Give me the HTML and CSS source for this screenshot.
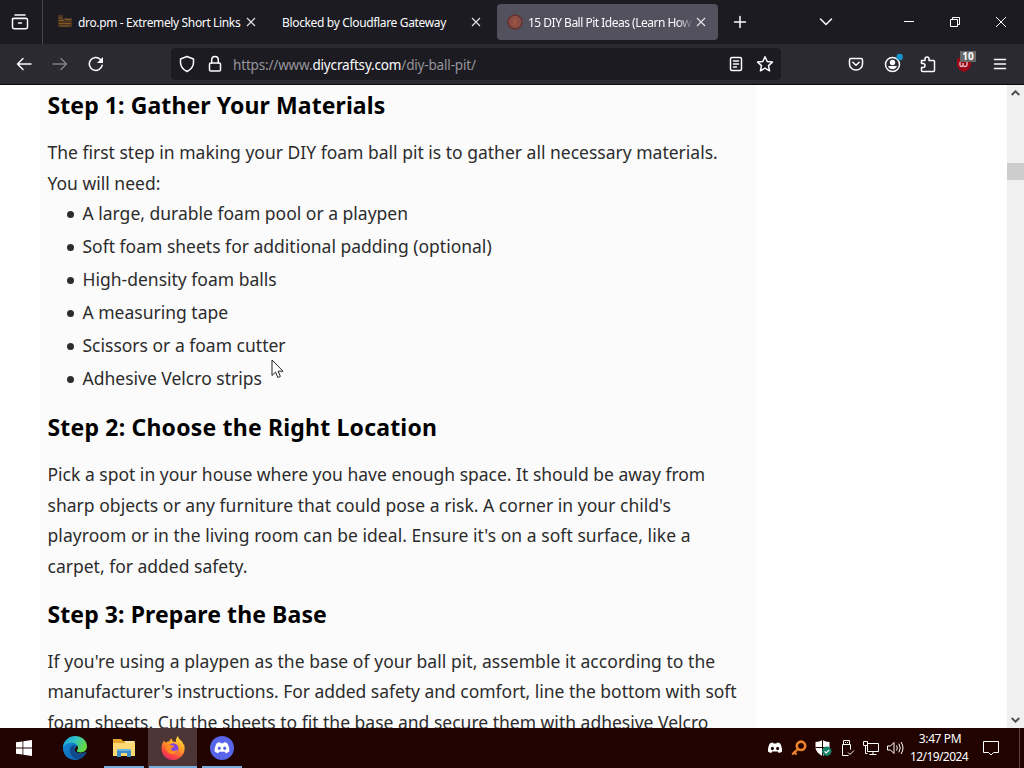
FILE: index.html
```html
<!DOCTYPE html>
<html lang="en">
<head>
    <meta charset="UTF-8">
    <meta name="viewport" content="width=device-width, initial-scale=1.0">
    <title>15 DIY Ball Pit Ideas (Learn How)</title>
    <link rel="stylesheet" href="styles.css">
</head>
<body>
    <div class="tabbar">
        <div class="tab-archive">
            <svg width="18" height="18" viewBox="0 0 18 18" class="line"><path d="M4 2h10M2.5 5.5h13M1.5 5.5v8.3c0 1.2.8 2 2 2h11c1.2 0 2-.8 2-2V7c0-1-.7-1.7-1.7-1.7H3.2c-1 0-1.7.7-1.7 1.7M7.500 10h3"/></svg>
        </div>
        <div class="tab">
            <svg class="favicon" width="16" height="16" viewBox="0 0 16 16"><path d="M1 1h5v3h9v9H1z" fill="#493323"/><path d="M2 4h3M2 6.5h5M8 5.5h6M2 9.5h12M3 12h10" stroke="#85581f" fill="none"/></svg>
            <span class="tab-title t-dro">dro.pm - Extremely Short Links</span>
            <svg class="tab-close" width="10" height="10" viewBox="0 0 10 10"><path d="M1 1l8 8M9 1l-8 8"/></svg>
        </div>
        <div class="tab">
            <span class="tab-title t-blocked">Blocked by Cloudflare Gateway</span>
            <svg class="tab-close" width="10" height="10" viewBox="0 0 10 10"><path d="M1 1l8 8M9 1l-8 8"/></svg>
        </div>
        <div class="tab active">
            <svg class="favicon" width="16" height="16" viewBox="0 0 16 16"><circle cx="8" cy="8" r="7" fill="#894c42" stroke="#633333" stroke-width="1.5"/><path d="M5 5l6 6M11 5l-6 6M8 3v10" stroke="#a75b43" stroke-width=".8"/></svg>
            <span class="tab-title t-ball">15 DIY Ball Pit Ideas (Learn How</span>
            <svg class="tab-close" width="10" height="10" viewBox="0 0 10 10"><path d="M1 1l8 8M9 1l-8 8"/></svg>
        </div>
        <svg class="new-tab line" width="14" height="14" viewBox="0 0 14 14"><path d="M7 1.500v11M1.500 7h11"/></svg>
        <svg class="all-tabs line" width="14" height="14" viewBox="0 0 14 14"><path d="M1.500 4L7 9.500 12.500 4"/></svg>
        <div class="window-buttons">
            <svg width="12" height="12" viewBox="0 0 12 12"><path d="M1 5.500h10"/></svg>
            <svg width="12" height="12" viewBox="0 0 12 12"><path d="M1.500 3.500h7v7h-7zM3.500 3.500v-2h7v7h-2"/></svg>
            <svg width="12" height="12" viewBox="0 0 12 12"><path d="M1 1l10 10M11 1L1 11"/></svg>
        </div>
    </div>

    <div class="toolbar">
        <div class="nav-buttons">
            <svg class="line" width="16" height="16" viewBox="0 0 16 16"><path d="M15 8H1.500M7 2.500L1.500 8 7 13.500"/></svg>
            <svg class="line disabled" width="16" height="16" viewBox="0 0 16 16"><path d="M1 8h13.500M9 2.500L14.500 8 9 13.500"/></svg>
            <svg class="line" width="16" height="16" viewBox="0 0 16 16"><path d="M14.200 9.200A6.500 6.500 0 1 1 12.500 3.400"/><path d="M15 1v6H9z" fill="#fbfbfe" stroke="none"/></svg>
        </div>
        <div class="urlbar">
            <svg class="line" width="16" height="18" viewBox="0 0 16 18"><path d="M8 1.500L14.500 4v3.500c0 4-2.500 7-6.500 9-4-2-6.500-5-6.500-9V4z"/></svg>
            <svg class="line" width="16" height="18" viewBox="0 0 16 18"><rect x="2.500" y="8" width="11" height="8" rx="1.300"/><path d="M4.700 8V4.800a3.300 3.300 0 0 1 6.600 0V8"/></svg>
            <span class="url">https://www.<b>diycraftsy.com</b>/diy-ball-pit/</span>
            <svg class="line" width="16" height="16" viewBox="0 0 16 16"><rect x="2.500" y="1.500" width="11" height="13" rx="1.500"/><path d="M5.500 5h5M5.500 8h5M5.500 11h3"/></svg>
            <svg class="line" width="18" height="18" viewBox="0 0 18 18"><path d="M9 1.800l2.200 4.700 5.200.6-3.900 3.500 1.100 5.200L9 13.200l-4.600 2.600 1.100-5.200L1.600 7.100l5.200-.6z"/></svg>
        </div>
        <div class="extensions">
            <svg class="line" width="16" height="16" viewBox="0 0 16 16"><path d="M3 2.500h10c1 0 1.500.5 1.500 1.500v4a6.500 6 0 0 1-13 0V4c0-1 .5-1.500 1.500-1.500zM4.800 6.300L8 9.300l3.200-3"/></svg>
            <svg width="22" height="22" viewBox="0 0 22 22"><circle cx="11.500" cy="11.500" r="7" fill="none" stroke="#fbfbfe" stroke-width="1.500"/><circle cx="11.500" cy="9.500" r="2.700" fill="#fbfbfe"/><path d="M7 13h9c-.8 2.300-2.500 3.300-4.500 3.300S7.800 15.300 7 13z" fill="#fbfbfe"/><circle cx="18.700" cy="4" r="3.200" fill="#1694cc"/></svg>
            <svg class="line" width="16" height="18" viewBox="0 0 16 18"><path d="M1.500 8V5.500H5V4a2 2 0 0 1 4 0v1.500h4.500c.8 0 1 .4 1 1v9c0 .7-.4 1-1 1H2.500c-.7 0-1-.3-1-1v-3H3a2 2 0 0 0 0-4H1.500z"/></svg>
            <div class="ublock">
                <svg width="16" height="16" viewBox="0 0 16 16"><path d="M8 0l7 3v5c0 4-3 6.500-7 8-4-1.500-7-4-7-8V3z" fill="#9e0718"/><path d="M4 6v3c0 2 3 2 3 0V7v2c0 2 4 2 4 0V6" fill="none" stroke="#e9c9cf" stroke-width="1.300"/></svg>
                <span class="badge">10</span>
            </div>
            <svg class="line" width="16" height="16" viewBox="0 0 16 16"><path d="M2.500 3.500h11M2.500 8h11M2.500 12.500h11"/></svg>
        </div>
    </div>

    <div class="page">
        <div class="article">
            <h2>Step 1: Gather Your Materials</h2>
            <p>The first step in making your DIY foam ball pit is to gather all necessary materials.<br>You will need:</p>
            <ul>
                <li>A large, durable foam pool or a playpen</li>
                <li>Soft foam sheets for additional padding (optional)</li>
                <li>High-density foam balls</li>
                <li>A measuring tape</li>
                <li>Scissors or a foam cutter</li>
                <li>Adhesive Velcro strips</li>
            </ul>
            <h2 class="wide">Step 2: Choose the Right Location</h2>
            <p>Pick a spot in your house where you have enough space. It should be away from<br><span class="loose">sharp objects or any furniture that could pose a risk. A corner in your child's</span><br><span class="looser">playroom or in the living room can be ideal. Ensure it's on a soft surface, like a</span><br>carpet, for added safety.</p>
            <h2>Step 3: Prepare the Base</h2>
            <p><span class="looser">If you're using a playpen as the base of your ball pit, assemble it according to the</span><br><span class="tight">manufacturer's instructions. For added safety and comfort, line the bottom with soft</span><br>foam sheets. Cut the sheets to fit the base and secure them with adhesive Velcro</p>
        </div>
        <div class="scrollbar">
            <svg width="9" height="6" viewBox="0 0 9 6"><path d="M.7 5L4.500 1.300 8.300 5"/></svg>
            <div class="thumb"></div>
            <svg width="9" height="6" viewBox="0 0 9 6"><path d="M.7 1l3.800 3.700L8.300 1"/></svg>
        </div>
    </div>

    <div class="taskbar">
        <div class="task start">
            <svg width="16" height="16" viewBox="0 0 16 16" fill="#fff"><path d="M0 2.300L6.500 1.400v6.200H0zM7.300 1.300L16 0v7.600H7.300zM0 8.400h6.500v6.200L0 13.700zM7.300 8.400H16V16l-8.700-1.300z"/></svg>
        </div>
        <div class="task">
            <svg width="24" height="24" viewBox="0 0 24 24">
                <defs>
                    <linearGradient id="edgeTop" x1="0" y1="0" x2="1" y2=".4"><stop offset="0" stop-color="#1595d6"/><stop offset=".5" stop-color="#30c3c8"/><stop offset="1" stop-color="#65d844"/></linearGradient>
                    <linearGradient id="edgeSide" x1="0" y1="0" x2="1" y2="1"><stop offset="0" stop-color="#1690dd"/><stop offset="1" stop-color="#0c56a3"/></linearGradient>
                </defs>
                <path d="M0 12C0 5 5 1 11 1c7 0 8 7 3 9-4 2-3 7 3 7.500 2.500.2 4-.8 5.500-1.500.6-.2.900.2.600.7C21 21 17 24 12 24 5 24 0 19 0 12z" fill="url(#edgeSide)"/>
                <path d="M9.500 9.500c-3.500 2-3.500 8 .5 11.500 1.500 1.500 3.500 2.300 5.500 2.400 3-.9 6-3.400 7.600-6.400.3-.7-.1-1-.7-.8-5 2.800-10.900.8-11.400-3.700-.1-1.500.4-2.500 1.500-3.500z" fill="#114a8b"/>
                <path d="M0 11.500C.8 4.500 6 0 12 0c7 0 12 4.800 12 10.300 0 4-3 6.200-6.200 6.200-2.500 0-4-.8-4-1.700 0-.7 1.200-1 1.200-3C15 9 12.200 6.800 9 6.800c-4 0-7.500 2-9 4.700z" fill="url(#edgeTop)"/>
            </svg>
        </div>
        <div class="task open">
            <svg width="22" height="20" viewBox="0 0 22 20"><path d="M0 1h8l2 2h12v15H0z" fill="#e6a72c"/><path d="M0 5h22v13H0z" fill="#fbd871"/><path d="M12 3h9v2h-9z" fill="#f8e6a4"/><path d="M4 11h14v8h-4v-4H8v4H4z" fill="#3c8cc8"/><path d="M4 11h14v2H4z" fill="#68b4e4"/></svg>
        </div>
        <div class="task open current">
            <svg width="24" height="24" viewBox="0 0 24 24">
                <defs><linearGradient id="fox" x1=".8" y1="0" x2=".3" y2="1"><stop offset="0" stop-color="#ffe03f"/><stop offset=".45" stop-color="#ff9a24"/><stop offset=".8" stop-color="#fb4342"/><stop offset="1" stop-color="#e52b70"/></linearGradient></defs>
                <path d="M3 4.500c.3 1 .8 1.800 1.500 2.200C6 5.500 7 5.500 8 5.500 8.500 4 9.500 3.200 11 2.500c-.2 1.500.2 2.200 1.200 3L15 6c-.4-2.500.3-4.500 2-6 .4 2.500 2 3.500 3.500 5 1.200 1.200 1.700 2.500 1.900 3.700L23 8c1 3.500 1 7-1 10.500-2 3.500-5.500 5.500-10 5.500C5.500 24 .8 19 .5 13 .4 9.700 1.500 6.500 3 4.500z" fill="url(#fox)"/>
                <circle cx="12.200" cy="12.500" r="5.300" fill="#8147dc"/>
                <path d="M5 8.500c2-.8 4 0 5 .8 1.300 0 2.500.2 3.200.8-.6 1.500-2.500 1.500-3 2.500-.3 2 2 3 4 2.200 1-.4 1.500-.6 2.600-.3-1.300 3-4 4-6.300 3.500C7.500 17.500 4.500 14 5 8.500z" fill="#ff8b22"/>
            </svg>
        </div>
        <div class="task open">
            <svg width="24" height="24" viewBox="0 0 24 24"><circle cx="12" cy="12" r="12" fill="#5865e8"/><path d="M6.700 7.300c1.300-.7 2.200-.9 3.300-1l.5 1h3l.5-1c1.100.1 2 .3 3.300 1 1.500 2.500 2.200 5.300 2 8.200-1.200 1-2.300 1.400-3.500 1.700l-.9-1.500H9.100l-.9 1.500c-1.200-.3-2.300-.7-3.500-1.700-.2-2.900.5-5.700 2-8.200z" fill="#fff"/><ellipse cx="9.300" cy="12.200" rx="1.500" ry="1.700" fill="#5865e8"/><ellipse cx="14.700" cy="12.200" rx="1.500" ry="1.700" fill="#5865e8"/></svg>
        </div>
        <div class="tray">
            <svg width="16" height="16" viewBox="0 0 16 16"><path d="M3 3.300c1.200-.6 2-.8 3-.9l.6 1h2.800l.6-1c1 .1 1.800.3 3 .9 1.500 2.400 2.200 5.200 2 8.200-1.200 1-2.200 1.300-3.300 1.600l-.9-1.500H5.200l-.9 1.500C3.200 12.800 2.200 12.500 1 11.500c-.2-3 .5-5.800 2-8.200z" fill="#fff"/><ellipse cx="5.400" cy="8.500" rx="1.500" ry="1.700" fill="#210300"/><ellipse cx="10.600" cy="8.500" rx="1.500" ry="1.700" fill="#210300"/></svg>
            <svg width="16" height="16" viewBox="0 0 16 16" fill="none" stroke="#ec8427"><circle cx="10" cy="5.800" r="4.200" stroke-width="2.600"/><path d="M7.200 8.700L1.200 14.500M2.500 11.500l3 3" stroke-width="2.200"/></svg>
            <svg width="18" height="16" viewBox="0 0 18 16"><path d="M8.500 0c2 1.300 4.300 2 7 2v5c0 4-3 7-7 9-4-2-7-5-7-9V2c2.700 0 5-.7 7-2z" fill="#fff"/><path d="M8.500 0v16M1.500 7.500h14" stroke="#210300"/><circle cx="12.800" cy="11.300" r="4.700" fill="#168267"/><path d="M10.500 11.300l1.700 1.700 3-3.200" stroke="#fff" stroke-width="1.200" fill="none"/></svg>
            <svg class="thin" width="16" height="18" viewBox="0 0 16 18"><path d="M4.500 5.500v-4h6v4M3.500 5.500h8v5M3.500 5.500v11h6M6 3.500h1M8 3.500h1M9 13.500l2 2 4-4"/></svg>
            <svg class="thin" width="18" height="16" viewBox="0 0 18 16"><path d="M5.500 3.500h11v8h-11zM11 11.500v3M7.500 14.500h7M1.500 1.500h4v4h-4zM3.500 5.500v8h2"/></svg>
            <svg class="thin" width="18" height="16" viewBox="0 0 18 16"><path d="M1.500 6h3L8 2.500v11L4.500 10h-3zM10.500 5.500q1.800 2.500 0 5M12.800 3.700q3 4.300 0 8.600M15 2q4 6 0 12"/></svg>
        </div>
        <div class="clock"><span>3:47 PM</span><span class="date">12/19/2024</span></div>
        <svg class="thin notice" width="18" height="18" viewBox="0 0 18 18"><path d="M1.500 2.500h15v11h-5L9 16l-2.500-2.500h-5z"/></svg>
        <div class="show-desktop"></div>
    </div>

    <svg class="cursor" width="13" height="20" viewBox="0 0 13 20"><path d="M1 1v15.500l3.500-3.400 2.300 5.400 2.600-1.100-2.300-5.200H12z"/></svg>
</body>
</html>
```

FILE: styles.css
```css
* {
    box-sizing: border-box;
}
body {
    margin: 0;
    width: 1024px;
    height: 768px;
    overflow: hidden;
    display: flex;
    flex-direction: column;
    font-family: "Noto Sans", "Open Sans", sans-serif;
    position: relative;
    background: #fff;
}
svg {
    flex: none;
    display: block;
}
.line {
    fill: none;
    stroke: #fbfbfe;
    stroke-width: 1.5;
    stroke-linecap: round;
    stroke-linejoin: round;
}
.disabled {
    opacity: 0.4;
}

/* Tabs */
.tabbar {
    height: 44px;
    flex: none;
    display: flex;
    align-items: center;
    background: #1c1b22;
    color: #fbfbfe;
}
.tab-archive {
    width: 43px;
    height: 44px;
    padding-left: 11px;
    margin-right: 4px;
    display: flex;
    align-items: center;
    border-right: 1px solid #48474f;
}
.tab {
    width: 221px;
    height: 36px;
    margin-right: 4px;
    padding: 0 12px 0 10px;
    display: flex;
    align-items: center;
    border-radius: 4px;
}
.tab.active {
    background: #53515e;
}
.favicon {
    margin-right: 5px;
}
.tab-title {
    flex: 1;
    min-width: 0;
    overflow: hidden;
    white-space: nowrap;
    font-size: 12px;
    line-height: 20px;
    margin-top: 2px;
    margin-right: 3px;
    letter-spacing: -0.34px;
}
.t-dro {
    letter-spacing: -0.36px;
}
.t-ball {
    letter-spacing: -0.5px;
    -webkit-mask-image: linear-gradient(to right, #000 91%, transparent);
    mask-image: linear-gradient(to right, #000 91%, transparent);
}
.tab-close {
    fill: none;
    stroke: #e4e4e8;
    stroke-width: 1.1;
}
.new-tab {
    margin-left: 11px;
}
.all-tabs {
    margin-left: 72px;
}
.window-buttons {
    display: flex;
    gap: 34px;
    margin-left: 70px;
}
.window-buttons svg {
    fill: none;
    stroke: #fff;
    stroke-width: 1;
}

/* Navigation */
.toolbar {
    height: 41px;
    flex: none;
    display: flex;
    align-items: center;
    background: #2b2a33;
    border-bottom: 1px solid #0c0c0d;
}
.nav-buttons {
    display: flex;
    gap: 20px;
    padding-left: 16px;
    width: 171px;
}
.urlbar {
    width: 610px;
    height: 32px;
    padding: 0 7px 0 8px;
    display: flex;
    align-items: center;
    gap: 12px;
    border-radius: 4px;
    background: #1c1b22;
}
.url {
    flex: 1;
    margin-left: -2px;
    padding-top: 1px;
    font-size: 13.5px;
    letter-spacing: -0.17px;
    color: #96959c;
    white-space: nowrap;
}
.url b {
    font-weight: normal;
    color: #fbfbfe;
}
.extensions {
    display: grid;
    grid-template-columns: repeat(5, 36px);
    justify-items: center;
    align-items: center;
    margin-left: 57px;
}
.ublock {
    position: relative;
}
.badge {
    position: absolute;
    left: 4px;
    top: -5px;
    width: 16px;
    height: 11px;
    background: #686868;
    color: #fff;
    font-size: 10px;
    font-weight: bold;
    line-height: 11px;
    text-align: center;
}

/* Page content */
.page {
    height: 643px;
    flex: none;
    padding-left: 40px;
    display: flex;
    justify-content: space-between;
    overflow: hidden;
}
.article {
    width: 716px;
    padding: 3px 8px 0 7.5px;
    background: #fbfbfb;
    color: #2c2c2c;
    font-size: 17.5px;
    white-space: nowrap;
}
.article h2 {
    margin: 0 0 15px;
    color: #000;
    font-size: 23px;
    line-height: 34px;
    letter-spacing: 0.09px;
}
.article h2.wide {
    letter-spacing: 0.19px;
}
.article p {
    margin: 0 0 15px;
    line-height: 30.6px;
}
.article ul {
    margin: -16px 0 15px;
    padding-left: 35px;
    list-style: none;
}
.article li {
    display: flex;
    align-items: center;
    line-height: 33px;
}
.article li::before {
    content: "";
    width: 7px;
    height: 7px;
    margin: 2px 9px 0 -16px;
    border-radius: 50%;
    background: #2c2c2c;
}
.loose {
    letter-spacing: 0.03px;
}
.looser {
    letter-spacing: 0.05px;
}
.tight {
    letter-spacing: -0.03px;
}
.scrollbar {
    width: 17px;
    padding: 5px 0;
    display: flex;
    flex-direction: column;
    align-items: center;
    background: #f0f0f0;
}
.scrollbar svg {
    fill: none;
    stroke: #505050;
    stroke-width: 2;
}
.thumb {
    width: 17px;
    height: 17px;
    margin: 67px 0 auto;
    background: #cdcdcd;
}

/* Taskbar */
.taskbar {
    height: 40px;
    flex: none;
    display: flex;
    align-items: center;
    background: #210300;
    color: #fff;
}
.task {
    width: 49px;
    height: 40px;
    display: flex;
    align-items: center;
    justify-content: center;
    border: solid transparent;
    border-width: 0 0 2px;
    padding-top: 2px;
}
.task.start {
    width: 48px;
    margin-right: 2px;
}
.task.open {
    background: linear-gradient(#76aee0, #76aee0) center bottom / 40px 2px no-repeat border-box;
}
.task.current {
    background: linear-gradient(#76aee0, #76aee0) center bottom / 48px 2px no-repeat border-box, #4d3535;
}
.tray {
    display: grid;
    grid-template-columns: repeat(6, 24px);
    justify-items: center;
    align-items: center;
    margin-left: 517px;
}
.thin {
    fill: none;
    stroke: #fff;
    stroke-width: 1;
}
.clock {
    width: 66px;
    display: flex;
    flex-direction: column;
    align-items: center;
    font-size: 12px;
    line-height: 18px;
    white-space: nowrap;
    letter-spacing: -0.4px;
}
.date {
    margin-left: -2px;
    letter-spacing: -0.6px;
}
.notice {
    margin-left: 9px;
}
.show-desktop {
    width: 1px;
    height: 40px;
    margin-left: 19px;
    background: #5a4341;
}

/* Mouse pointer */
.cursor {
    position: absolute;
    left: 271px;
    top: 359px;
    fill: #fff;
    stroke: #222;
    stroke-width: 1;
}
```
